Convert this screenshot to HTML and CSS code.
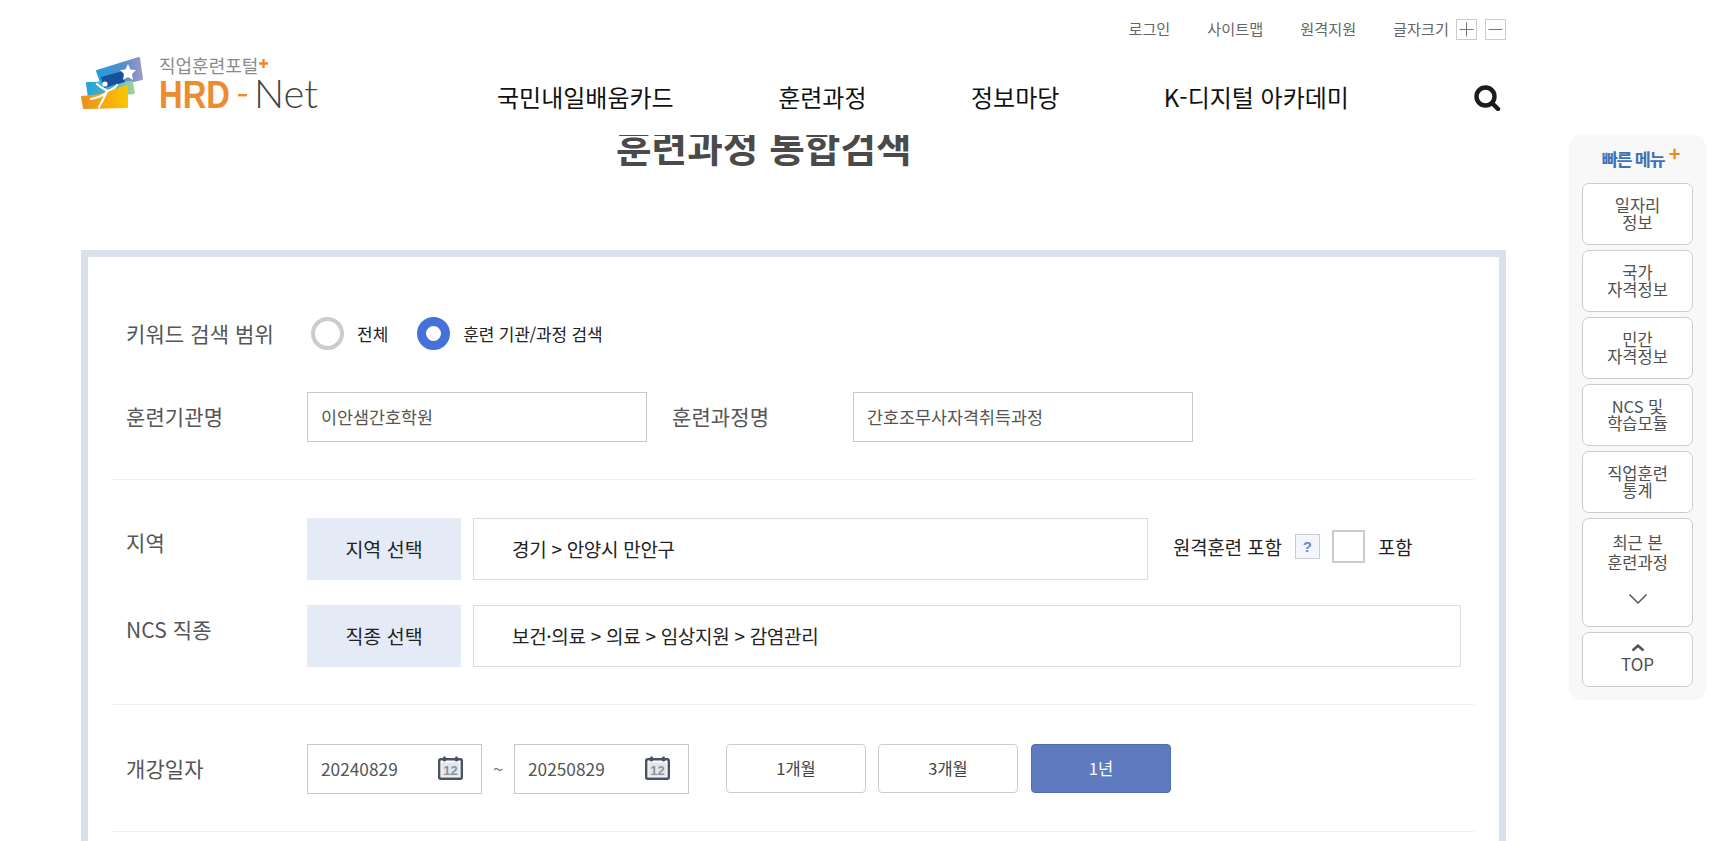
FILE: index.html
```html
<!DOCTYPE html>
<html lang="ko">
<head>
<meta charset="utf-8">
<title>훈련과정 통합검색</title>
<link rel="stylesheet" href="styles.css">
</head>
<body>
<div class="page">
  <header class="header">
    <div class="util">
      <a class="util-link">로그인</a>
      <a class="util-link">사이트맵</a>
      <a class="util-link">원격지원</a>
      <div class="size-ctl">
        <span class="size-label">글자크기</span>
        <span class="size-btn"><svg width="19" height="19" viewBox="0 0 19 19"><path d="M9.5 2.5v14M2.5 9.5h14" stroke="#777" stroke-width="1" fill="none"/></svg></span>
        <span class="size-btn"><svg width="19" height="19" viewBox="0 0 19 19"><path d="M2.5 9.5h14" stroke="#777" stroke-width="1" fill="none"/></svg></span>
      </div>
    </div>
    <div class="mainbar">
      <svg class="logo" width="260" height="65" viewBox="0 -5 260 65">
        <defs>
          <linearGradient id="gTop" x1="0" x2="1" y1="0" y2="0"><stop offset="0" stop-color="#1f9fdc"/><stop offset="0.55" stop-color="#4f8ccb"/><stop offset="1" stop-color="#9d97cb"/></linearGradient>
          <linearGradient id="gMid" x1="0" x2="1" y1="0" y2="0"><stop offset="0" stop-color="#22a5dc"/><stop offset="0.5" stop-color="#4db3c6"/><stop offset="1" stop-color="#a5d29a"/></linearGradient>
          <linearGradient id="gBot" x1="0" x2="1" y1="0" y2="0"><stop offset="0" stop-color="#ee8f1f"/><stop offset="1" stop-color="#fcc400"/></linearGradient>
        </defs>
        <polygon points="17,16 59,3 62,24 23,33" fill="url(#gTop)" stroke="url(#gTop)" stroke-width="2" stroke-linejoin="round"/>
        <polygon points="7,28 52,27 54,38 9,43" fill="url(#gMid)" stroke="url(#gMid)" stroke-width="2" stroke-linejoin="round"/>
        <polygon points="21,22 43,16 45,27 24,33" fill="#17509f"/>
        <polygon points="2,42 20,40 47,31 47,52 4,53" fill="url(#gBot)" stroke="url(#gBot)" stroke-width="2" stroke-linejoin="round"/>
        <polygon points="48,9 50.5,14.5 56,15 52,19 53,25 48,22 43,25 44,19 40,15 45.5,14.5" fill="#fff"/>
        <circle cx="25" cy="29" r="2.6" fill="#fff"/>
        <path d="M17 29 C21 33 25 34 27 36 C31 35 35 33 37 30 M27 36 C25 41 23 45 19 52 M27 37 C23 41 16 43 11 44" stroke="#fff" stroke-width="2.2" fill="none" stroke-linecap="round"/>
        <text class="logo-sub" x="79" y="18">직업훈련포털</text>
        <path d="M179 8.5h9M183.5 4v9" stroke="#ee8a22" stroke-width="2.4" fill="none"/>
        <text class="logo-hrd" x="79" y="53" textLength="71" lengthAdjust="spacingAndGlyphs">HRD</text>
        <rect x="158" y="39" width="9" height="2.4" fill="#ee8a22"/>
        <text class="logo-net" x="174" y="53" textLength="64" lengthAdjust="spacingAndGlyphs">Net</text>
      </svg>
      <nav class="nav">
        <a class="nav-link">국민내일배움카드</a>
        <a class="nav-link">훈련과정</a>
        <a class="nav-link">정보마당</a>
        <a class="nav-link">K-디지털 아카데미</a>
      </nav>
      <svg class="search-icon" width="28" height="26" viewBox="0 0 28 26"><circle cx="12.5" cy="11.5" r="9" fill="none" stroke="#1c1c1c" stroke-width="4.400"/><path d="M19 18l6 6" stroke="#1c1c1c" stroke-width="4.400" stroke-linecap="round"/></svg>
    </div>
  </header>

  <h1 class="title">훈련과정 통합검색</h1>

  <main class="panel">
    <section class="group group-first">
      <div class="row row-radio">
        <div class="label">키워드 검색 범위</div>
        <label class="radio-item"><span class="radio"></span><span class="radio-text">전체</span></label>
        <label class="radio-item"><span class="radio radio-on"></span><span class="radio-text radio-text-tight">훈련 기관/과정 검색</span></label>
      </div>
      <div class="row row-names">
        <div class="label">훈련기관명</div>
        <div class="input input-name">이안샘간호학원</div>
        <div class="label label-second">훈련과정명</div>
        <div class="input input-name">간호조무사자격취득과정</div>
      </div>
    </section>

    <section class="group group-second">
      <div class="row row-pick">
        <div class="label">지역</div>
        <div class="pick-btn">지역 선택</div>
        <div class="pick-field pick-short">경기 &gt; 안양시 만안구</div>
        <div class="remote">
          <span class="remote-label">원격훈련 포함</span>
          <span class="help">?</span>
          <span class="check"></span>
          <span class="remote-label remote-opt">포함</span>
        </div>
      </div>
      <div class="row row-pick">
        <div class="label">NCS 직종</div>
        <div class="pick-btn">직종 선택</div>
        <div class="pick-field pick-long">보건·의료 &gt; 의료 &gt; 임상지원 &gt; 감염관리</div>
      </div>
    </section>

    <section class="group group-third">
      <div class="row row-date">
        <div class="label">개강일자</div>
        <div class="input input-date">20240829
          <svg class="cal" width="25" height="24" viewBox="0 0 25 24"><rect x="1.2" y="3.2" width="22.6" height="19.6" rx="1.5" fill="#fff" stroke="#4a5263" stroke-width="2.4"/><rect x="5" y="0.5" width="3" height="5" rx="1.2" fill="#4a5263"/><rect x="17" y="0.5" width="3" height="5" rx="1.2" fill="#4a5263"/><rect x="3.5" y="6.5" width="18" height="14" fill="#e4e6ea"/><text class="cal-num" x="12.5" y="18.5">12</text></svg>
        </div>
        <span class="tilde">~</span>
        <div class="input input-date">20250829
          <svg class="cal" width="25" height="24" viewBox="0 0 25 24"><rect x="1.2" y="3.2" width="22.6" height="19.6" rx="1.5" fill="#fff" stroke="#4a5263" stroke-width="2.4"/><rect x="5" y="0.5" width="3" height="5" rx="1.2" fill="#4a5263"/><rect x="17" y="0.5" width="3" height="5" rx="1.2" fill="#4a5263"/><rect x="3.5" y="6.5" width="18" height="14" fill="#e4e6ea"/><text class="cal-num" x="12.5" y="18.5">12</text></svg>
        </div>
        <div class="periods">
          <div class="period">1개월</div>
          <div class="period">3개월</div>
          <div class="period period-on">1년</div>
        </div>
      </div>
    </section>
  </main>

  <aside class="quick">
    <div class="quick-title">빠른 메뉴<span class="quick-plus">+</span></div>
    <a class="quick-btn">일자리<br>정보</a>
    <a class="quick-btn">국가<br>자격정보</a>
    <a class="quick-btn">민간<br>자격정보</a>
    <a class="quick-btn">NCS 및<br>학습모듈</a>
    <a class="quick-btn">직업훈련<br>통계</a>
    <a class="quick-btn quick-recent">최근 본<br>훈련과정
      <svg class="quick-chev" width="20" height="12" viewBox="0 0 20 12"><path d="M1.5 1.5L10 10l8.500-8.500" fill="none" stroke="#555" stroke-width="1.500"/></svg>
    </a>
    <a class="quick-btn quick-top">
      <svg width="14" height="8" viewBox="0 0 14 8"><path d="M1.500 6.500L7 1.800l5.500 4.700" fill="none" stroke="#555" stroke-width="2.600"/></svg>
      <span>TOP</span>
    </a>
  </aside>
</div>
</body>
</html>
```

FILE: styles.css
```css
* { box-sizing: border-box; }
html, body { margin: 0; padding: 0; background: #fff; }
body {
  height: 841px;
  overflow: hidden;
  font-family: "Noto Sans CJK KR", "Noto Sans", sans-serif;
  color: #444;
}
.page { position: relative; width: 1725px; height: 841px; overflow: hidden; }

/* header */
.header {
  position: relative;
  z-index: 2;
  height: 135px;
  padding: 19px 219px 0 80px;
  background: #fff;
}
.util { display: flex; justify-content: flex-end; align-items: center; gap: 37px; height: 21px; }
.util-link, .size-label { font-size: 15.200px; line-height: 21px; color: #666; margin-top: -3px; }
.size-ctl { display: flex; align-items: center; }
.size-btn {
  display: flex;
  width: 21px;
  height: 21px;
  margin-left: 8px;
  border: 1px solid #ccc;
}
.size-label { margin-right: -1px; }
.mainbar { display: flex; align-items: flex-start; margin-top: 10px; }
.logo { display: block; flex: none; }
.logo-sub { font-size: 18px; fill: #8b8b8b; font-family: "Noto Sans CJK KR", sans-serif; }
.logo-hrd { font-size: 39px; font-weight: 700; fill: #ec8c2f; font-family: "Liberation Sans", sans-serif; }
.logo-net { font-size: 39px; font-weight: 300; fill: #444; font-family: "Lato", sans-serif; }
.nav { display: flex; gap: 104.500px; margin: 29px 0 0 157px; }
.nav-link { font-size: 24px; line-height: 36px; font-weight: 400; color: #111; white-space: nowrap; }
.search-icon { flex: none; margin: 35px 5px 0 auto; }

/* title */
.title {
  margin: -15px 0 80px;
  padding-left: 616px;
  font-size: 38.700px;
  line-height: 50px;
  font-weight: 700;
  color: #4a4a4a;
  white-space: nowrap;
}

/* panel */
.panel {
  width: 1425px;
  height: 700px;
  margin-left: 81px;
  padding: 0 25px;
  border: 7px solid #dbe1ec;
  border-bottom: 0;
}
.group { padding-left: 13px; border-bottom: 1px solid #eee; }
.group-first { height: 223px; padding-top: 60px; }
.group-second { height: 225px; padding-top: 38px; }
.group-third { height: 127px; padding-top: 39px; }
.row { display: flex; align-items: flex-start; }
.label {
  flex: none;
  width: 181px;
  font-size: 21px;
  line-height: 48px;
  letter-spacing: 0.100px;
  color: #555;
  white-space: nowrap;
}
.label-second { width: 181px; margin-left: 25px; }

.row-radio { height: 33px; }
.row-radio .label { line-height: 33px; }
.radio-item { display: flex; align-items: center; height: 33px; margin-left: 4px; margin-right: 29px; }
.radio-item + .radio-item { margin-left: 0; }
.radio {
  width: 33px;
  height: 33px;
  border: 4px solid #ccc;
  border-radius: 50%;
  background: #fff;
}
.radio-on { border: 9px solid #4472d8; }
.radio-text { margin-left: 13px; font-size: 17px; line-height: 33px; color: #222; }
.radio-text-tight { letter-spacing: -0.200px; }

.row-names { margin-top: 42px; }
.input {
  flex: none;
  height: 50px;
  border: 1px solid #c8c8c8;
  background: #fff;
  font-size: 17.400px;
  line-height: 48px;
  color: #555;
}
.input-name { width: 340px; padding-left: 13px; }

.row-pick + .row-pick { margin-top: 25px; }
.pick-btn {
  flex: none;
  width: 154px;
  height: 62px;
  margin-right: 12px;
  background: #e4ebf6;
  font-size: 19.500px;
  line-height: 62px;
  text-align: center;
  color: #222;
}
.pick-field {
  height: 62px;
  padding-left: 38px;
  border: 1px solid #dcdcdc;
  font-size: 19px;
  line-height: 60px;
  letter-spacing: -0.300px;
  color: #222;
  white-space: nowrap;
}
.pick-short { width: 675px; flex: none; }
.pick-long { width: 988px; flex: none; }
.remote { display: flex; align-items: center; height: 57px; margin-left: 25px; }
.remote-label { font-size: 18.800px; color: #222; white-space: nowrap; }
.remote-opt { margin-left: 13px; }
.help {
  width: 25px;
  height: 25px;
  margin-left: 13px;
  border: 1px solid #ccc;
  background: #f3f6fc;
  font-family: "Liberation Sans", sans-serif;
  font-size: 15px;
  font-weight: 700;
  line-height: 23px;
  text-align: center;
  color: #6d8ad2;
}
.check {
  width: 33px;
  height: 33px;
  margin-left: 12px;
  border: 2px solid #ccc;
  background: #fff;
}

.input-date {
  position: relative;
  width: 175px;
  padding-left: 13px;
  font-size: 17.300px;
  color: #555;
}
.cal { position: absolute; right: 18px; top: 11px; }
.cal-num { font-family: "Liberation Sans", sans-serif; font-size: 13px; font-weight: 700; fill: #8f939c; text-anchor: middle; }
.tilde { flex: none; width: 32px; font-size: 18px; line-height: 48px; text-align: center; color: #777; }
.periods { display: flex; gap: 12px; margin-left: 37px; }
.period {
  width: 140px;
  height: 49px;
  border: 1px solid #ccc;
  border-radius: 4px;
  font-size: 16.500px;
  line-height: 47px;
  text-align: center;
  color: #444;
}
.period-on { margin-left: 1px; background: #5f7bbf; border-color: #4f6db5; color: #fff; }

/* quick menu */
.quick {
  position: absolute;
  left: 1569px;
  top: 135px;
  display: flex;
  flex-direction: column;
  align-items: center;
  gap: 5px;
  width: 137px;
  height: 565px;
  background: #f8f8f8;
  border-radius: 12px;
}
.quick-title {
  position: relative;
  height: 43px;
  padding-top: 12px;
  margin-right: 9px;
  font-size: 17.500px;
  line-height: 24px;
  font-weight: 700;
  letter-spacing: -1.400px;
  color: #3d70b5;
}
.quick-plus {
  position: absolute;
  right: -15px;
  top: 6px;
  font-size: 20px;
  line-height: 24px;
  color: #ee8a22;
}
.quick-btn {
  display: flex;
  flex-direction: column;
  justify-content: center;
  align-items: center;
  flex: none;
  width: 111px;
  height: 62px;
  border: 1px solid #ccc;
  border-radius: 7px;
  background: #fff;
  font-size: 16.500px;
  line-height: 17px;
  text-align: center;
  color: #505050;
}
.quick-recent { height: 109px; justify-content: flex-start; padding-top: 13px; line-height: 20px; }
.quick-chev { margin-top: 21px; }
.quick-top { height: 55px; padding-bottom: 3px; font-size: 17px; }
.quick-top span { margin-top: 3px; }
```
